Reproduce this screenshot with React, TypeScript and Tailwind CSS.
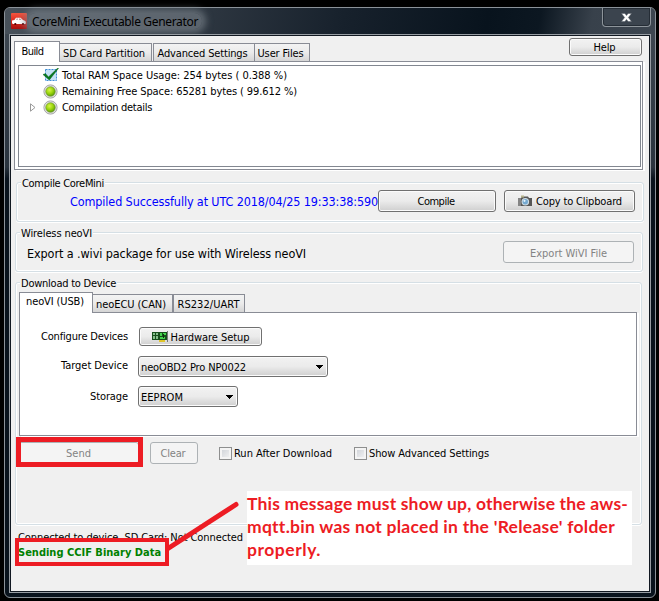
import { useLayoutEffect, useRef, useState, type ReactNode } from "react";
import clsx from "clsx";

/** Single line of text whose letter spacing is computed so that it fills `w` pixels. */
function Txt({ w, children, className }: { w: number; children: string; className?: string }) {
  const ref = useRef<HTMLSpanElement>(null);
  const [spacing, setSpacing] = useState(0);
  useLayoutEffect(() => {
    const el = ref.current;
    if (!el) return;
    const natural = el.getBoundingClientRect().width - spacing * children.length;
    const next = (w - natural) / children.length;
    if (Math.abs(next - spacing) > 0.005) setSpacing(next);
  }, [w, children, spacing]);
  return (
    <span ref={ref} className={clsx("inline-block shrink-0 pt-[2px] whitespace-pre", className)} style={{ letterSpacing: spacing }}>
      {children}
    </span>
  );
}

function Button({ className, disabled, children }: { className?: string; disabled?: boolean; children: ReactNode }) {
  return (
    <button
      className={clsx(
        "flex shrink-0 items-center justify-center rounded-[3px] border",
        disabled
          ? "border-[#adb2b5] bg-[#f4f4f4] text-[#838383]"
          : "border-[#707070] bg-linear-to-b from-[#f2f2f2] from-0% via-[#ebebeb] via-50% to-[#cfcfcf] shadow-[inset_0_0_0_1px_#fbfbfb]",
        className,
      )}
    >
      {children}
    </button>
  );
}

function Tab({ active, className, children }: { active?: boolean; className?: string; children: ReactNode }) {
  return (
    <div
      className={clsx(
        "flex shrink-0 justify-center border border-b-0 border-[#898c95]",
        active ? "relative z-10 -mb-px h-[21px] bg-white" : "h-[18px] items-center bg-linear-to-b from-[#f3f3f3] via-[#ebebeb] to-[#d5d5d5] pr-[3px]",
        className,
      )}
    >
      {children}
    </div>
  );
}

function Group({ title, titleWidth, className, children }: { title: string; titleWidth: number; className?: string; children: ReactNode }) {
  return (
    <section className={clsx("shrink-0 rounded-[3px] border border-[#d5dfe5] shadow-[inset_0_0_0_1px_#fff,0_1px_0_#fff]", className)}>
      <h2 className="-mt-[8px] ml-[4px] flex h-[15px] w-fit items-center bg-[#f0f0f0] px-px">
        <Txt w={titleWidth}>{title}</Txt>
      </h2>
      {children}
    </section>
  );
}

function Combo({ label, w, className }: { label: string; w: number; className?: string }) {
  return (
    <Button className={clsx("h-[21px] justify-between! pr-[4px] pl-[2px]", className)}>
      <Txt w={w}>{label}</Txt>
      <svg width="7" height="4" viewBox="0 0 7 4" shapeRendering="crispEdges">
        <path d="M0 0h7v1H6v1H5v1H4v1H3V3H2V2H1V1H0z" />
      </svg>
    </Button>
  );
}

function Checkbox({ label, w, className }: { label: string; w: number; className?: string }) {
  return (
    <label className={clsx("flex items-center", className)}>
      <span className="mr-[2px] size-[13px] border border-[#8e8f8f] bg-linear-to-br from-[#cbcfd5] to-[#f6f6f6] shadow-[inset_0_0_0_2px_#f4f4f4]" />
      <Txt w={w}>{label}</Txt>
    </label>
  );
}

function GreenLight() {
  return (
    <svg width="15" height="15" viewBox="0 0 15 15">
      <defs>
        <radialGradient id="light" cx="0.4" cy="0.35" r="0.65">
          <stop offset="0" stopColor="#d8f34a" />
          <stop offset="0.55" stopColor="#9bd60c" />
          <stop offset="1" stopColor="#5d9d08" />
        </radialGradient>
      </defs>
      <circle cx="7.5" cy="7.5" r="6.6" fill="#e3e3e3" stroke="#a6a6a6" />
      <circle cx="7.5" cy="7.5" r="4.8" fill="url(#light)" stroke="#6c8f38" strokeWidth="0.6" />
    </svg>
  );
}

function CheckIcon() {
  return (
    <svg width="16" height="14" viewBox="0 0 16 14">
      <rect x="2.5" y="1.5" width="11" height="11" fill="#c4e1f7" stroke="#3f8fd6" strokeDasharray="2 1" />
      <path d="M0 6.5l2.5-.8L5.5 9 14.5.3h1L6.3 12z" fill="#067a1e" stroke="#045c14" strokeWidth="0.5" />
    </svg>
  );
}

function CarIcon() {
  return (
    <svg width="16" height="16" viewBox="0 0 16 16">
      <defs>
        <linearGradient id="car" x1="0" y1="0" x2="0" y2="1">
          <stop offset="0" stopColor="#f2553f" />
          <stop offset="0.5" stopColor="#d92a20" />
          <stop offset="1" stopColor="#a8100e" />
        </linearGradient>
      </defs>
      <rect width="16" height="16" rx="1" fill="url(#car)" />
      <path d="M1 7.4l2.4-.5L5 4.8h4.6L12 7l2.5.9.5 2.3-.9.9H2l-1-.8z" fill="#fff" />
      <path d="M4.7 6.8l.9-1.3h1.4v1.3zM8 5.5h1.3L10.6 7H8z" fill="#c99" />
      <circle cx="4.3" cy="11" r="1.1" fill="#500" />
      <circle cx="12" cy="11" r="1.1" fill="#500" />
    </svg>
  );
}

function CameraIcon() {
  return (
    <svg width="16" height="12" viewBox="0 0 16 12">
      <path d="M1 3h3l1-1.5h6L12 3h3v8H1z" fill="#565656" />
      <path d="M1 3h3v8H1z" fill="#858585" />
      <rect x="4" y="0.5" width="3" height="2" fill="#b5b38b" />
      <circle cx="8.3" cy="6.7" r="3.8" fill="#cfdce4" />
      <circle cx="8.3" cy="6.7" r="2.7" fill="#75a9d0" />
      <circle cx="7.5" cy="5.8" r="1.1" fill="#e5f4ff" />
    </svg>
  );
}

function BoardIcon() {
  return (
    <svg width="16" height="12" viewBox="0 0 16 12" shapeRendering="crispEdges">
      <path d="M0 1h15v8H0z" fill="#174f1c" />
      <path d="M1 2h2v2H1zM4 2h2v2H4zM1 5h2v3H1zM4 5h2v3H4z" fill="#86bf8c" />
      <path d="M8 2h2v3H8zM11 2h3v2h-3zM8 6h5v2H8z" fill="#46d44f" />
      <path d="M11 3h1v4h-1z" fill="#0b330e" />
      <path d="M7 9h6v2H7z" fill="#e0c52a" />
      <path d="M15 0h1v11h-1z" fill="#777" />
    </svg>
  );
}

function TreeRow({ icon, label, w, expandable }: { icon: ReactNode; label: string; w: number; expandable?: boolean }) {
  return (
    <li className="flex h-[16px] items-center">
      <span className="flex w-[24px] justify-start pl-[11px]">
        {expandable && (
          <svg width="6" height="9" viewBox="0 0 6 9">
            <path d="M.5.8v7.4L5 4.5z" fill="#fff" stroke="#9a9a9a" />
          </svg>
        )}
      </span>
      <span className="flex w-[19px] justify-start">{icon}</span>
      <Txt w={w}>{label}</Txt>
    </li>
  );
}

export default function App() {
  return (
    <div className="relative h-[601px] w-[659px] overflow-hidden bg-black pt-[7px] pl-[4px] font-['DejaVu_Sans_Condensed','DejaVu_Sans',sans-serif] text-[11px] leading-[12px] text-black">
      <div className="flex h-[591px] w-[652px] flex-col rounded-[6px] border border-[#8b9299] bg-linear-to-b from-[#414a54] from-0% via-[#2a343e] via-27% to-[#09131d] to-29% px-[4px] pb-[4px]">
        <header className="-mx-[4px] flex h-[26px] shrink-0 justify-between rounded-t-[5px] bg-[linear-gradient(100deg,#48515a_0%,#303943_28%,#17212c_52%,#08131d_74%,#0c1721_82%,#38414b_90%,#3d4650_100%)]">
          <div className="flex items-center">
            <span className="ml-[6px]">
              <CarIcon />
            </span>
            <span className="ml-[1px] flex h-[16px] items-center rounded-full bg-[#79828a]/60 px-[4px] font-['Noto_Sans',sans-serif] text-[12px] shadow-[0_0_7px_4px_#79828aaa]">
              <Txt w={166}>CoreMini Executable Generator</Txt>
            </span>
          </div>
          <button className="mr-[4px] flex h-[19px] w-[49px] items-center justify-center rounded-b-[4px] border border-t-0 border-[#8e959b] bg-[#3b444e] shadow-[inset_0_0_0_1px_#252d36]">
            <svg width="11" height="9" viewBox="0 0 11 9">
              <path d="M0.5 0.5h3.4L5.5 2.6 7.1.5h3.4L7.4 4.5l3.1 4H7.1L5.5 6.4 3.9 8.5H.5l3.1-4z" fill="#fff" stroke="#555d66" strokeWidth="0.5" />
            </svg>
          </button>
        </header>

        <div className="border border-[#979da3]">
          <main className="flex h-[557px] flex-col border border-[#111821] bg-[#f0f0f0]">
            <div className="flex h-[25px] shrink-0 items-end pr-[7px] pl-[3px]">
              <Tab active className="w-[46px]">
                <Txt w={22} className="mt-[2px] -ml-[9px]">Build</Txt>
              </Tab>
              <Tab className="w-[92px] border-l-0"><Txt w={82}>SD Card Partition</Txt></Tab>
              <Tab className="ml-px w-[102px]"><Txt w={90}>Advanced Settings</Txt></Tab>
              <Tab className="-ml-px w-[56px]"><Txt w={46}>User Files</Txt></Tab>
              <Button className="mb-[5px] ml-auto h-[18px] w-[73px] pr-[2px]"><Txt w={22}>Help</Txt></Button>
            </div>

            <div className="ml-[3px] h-[109px] w-[629px] shrink-0 border border-[#898c95] bg-white p-[3px] shadow-[2px_1px_0_#fff]">
              <ul className="h-[102px] w-[623px] border border-[#828790] bg-white pt-px">
                <TreeRow icon={<CheckIcon />} label="Total RAM Space Usage: 254 bytes ( 0.388 %)" w={225} />
                <TreeRow icon={<GreenLight />} label="Remaining Free Space: 65281 bytes ( 99.612 %)" w={235} />
                <TreeRow icon={<GreenLight />} label="Compilation details" w={90} expandable />
              </ul>
            </div>

            <Group title="Compile CoreMini" titleWidth={82} className="mt-[12px] ml-[5px] h-[40px] w-[628px]">
              <div className="flex items-center pl-[53px]">
                <Txt w={308} className="text-[12.5px] text-[#0000ff]">Compiled Successfully at UTC 2018/04/25 19:33:38:590</Txt>
                <Button className="h-[22px] w-[118px] pr-[2px]"><Txt w={37}>Compile</Txt></Button>
                <Button className="ml-[8px] h-[22px] w-[131px] gap-[3px]">
                  <CameraIcon />
                  <Txt w={86}>Copy to Clipboard</Txt>
                </Button>
              </div>
            </Group>

            <Group title="Wireless neoVI" titleWidth={71} className="mt-[10px] ml-[4px] h-[40px] w-[628px]">
              <div className="mt-px flex items-center justify-between pr-[8px] pl-[11px]">
                <Txt w={279} className="mt-[2px] text-[12.5px]">Export a .wivi package for use with Wireless neoVI</Txt>
                <Button disabled className="h-[22px] w-[131px] pt-px"><Txt w={77}>Export WiVI File</Txt></Button>
              </div>
            </Group>

            <Group title="Download to Device" titleWidth={95} className="mt-[10px] ml-[4px] h-[243px] w-[627px]">
              <div className="ml-[3px]">
                <div className="flex h-[22px] items-end">
                  <Tab active className="w-[74px]">
                    <Txt w={58} className="mt-px -ml-[2px]">neoVI (USB)</Txt>
                  </Tab>
                  <Tab className="w-[80px] border-l-0"><Txt w={70}>neoECU (CAN)</Txt></Tab>
                  <Tab className="w-[72px] pr-px!"><Txt w={62}>RS232/UART</Txt></Tab>
                </div>
                <div className="flex h-[124px] w-[618px] flex-col border border-[#898c95] bg-white pt-[14px] shadow-[2px_1px_0_#fff]">
                  <div className="flex h-[19px] items-center">
                    <span className="flex w-[108px] justify-end pb-px"><Txt w={87}>Configure Devices</Txt></span>
                    <Button className="ml-[11px] h-[19px] w-[123px] gap-[3px]">
                      <BoardIcon />
                      <Txt w={79}>Hardware Setup</Txt>
                    </Button>
                  </div>
                  <div className="mt-[10px] flex h-[21px] items-center">
                    <span className="flex w-[108px] justify-end pb-[3px]"><Txt w={67}>Target Device</Txt></span>
                    <Combo label="neoOBD2 Pro NP0022" w={105} className="ml-[10px] w-[190px]" />
                  </div>
                  <div className="mt-[9px] flex h-[21px] items-center">
                    <span className="flex w-[108px] justify-end pb-px"><Txt w={38}>Storage</Txt></span>
                    <Combo label="EEPROM" w={42} className="ml-[10px] w-[100px]" />
                  </div>
                </div>
              </div>
              <div className="mt-[6px] flex h-[22px] items-center">
                <Button disabled className="ml-[2px] h-[22px] w-[121px]"><Txt w={25}>Send</Txt></Button>
                <Button disabled className="ml-[11px] h-[22px] w-[48px] pr-[2px]"><Txt w={25}>Clear</Txt></Button>
                <Checkbox label="Run After Download" w={98} className="ml-[21px]" />
                <Checkbox label="Show Advanced Settings" w={120} className="ml-[22px]" />
              </div>
            </Group>

            <footer className="mt-[5px] ml-[7px] flex flex-col">
              <Txt w={225} className="self-start">Connected to device. SD Card: Not Connected</Txt>
              <Txt w={143} className="mt-px self-start font-bold text-[#008000]">Sending CCIF Binary Data</Txt>
            </footer>
          </main>
        </div>
      </div>

      {/* Annotations drawn over the window */}
      <div className="absolute top-[437px] left-[16px] h-[30px] w-[127px] border-[5px] border-[#ed1c24]" />
      <div className="absolute top-[538px] left-[15px] h-[28px] w-[154px] border-[4px] border-[#ed1c24]" />
      <svg className="absolute top-[495px] left-[160px]" width="85" height="60" viewBox="0 0 85 60">
        <path d="M8 53.5L76 9.5" stroke="#ed1c24" strokeWidth="5" strokeLinecap="round" />
      </svg>
      <div className="absolute top-[491px] left-[247px] flex h-[74px] w-[385px] flex-col items-start bg-white font-[Lato,sans-serif] text-[17.5px] leading-[21px] font-bold text-[#ed1c24]">
        <Txt w={381}>This message must show up, otherwise the aws-</Txt>
        <Txt w={368}>mqtt.bin was not placed in the 'Release' folder</Txt>
        <Txt w={74}>properly.</Txt>
      </div>
    </div>
  );
}
